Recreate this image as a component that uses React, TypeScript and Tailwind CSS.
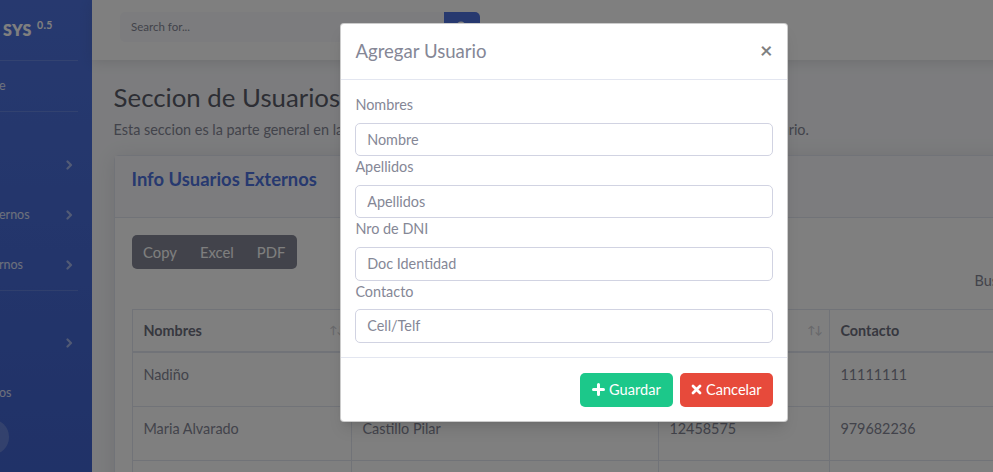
import React from 'react';

const font = { fontFamily: 'Lato, "Noto Sans", sans-serif' };

const Chevron = () => (
  <svg width="7" height="10" viewBox="0 0 7 10" className="text-white/50">
    <path d="M1.5 1.5 L5 5 L1.5 8.5" fill="none" stroke="currentColor" strokeWidth="2.2" strokeLinecap="round" strokeLinejoin="round" />
  </svg>
);

const SideItem = ({ label, arrow }: { label?: string; arrow?: boolean }) => (
  <div className="h-[50px] flex items-center justify-between pr-[19px] text-[12.5px] text-white/80">
    <span className="-ml-[1px]">{label}</span>
    {arrow && <Chevron />}
  </div>
);

const Divider = () => <div className="h-px w-[78px] bg-white/15" />;

const Sidebar = () => (
  <aside className="w-[92px] shrink-0 bg-gradient-to-b from-[#4e73df] to-[#4164d0] overflow-hidden">
    <div className="h-[60px] flex items-center pl-[3px] text-white font-extrabold text-[16px] tracking-wide">
      SYS <sup className="ml-[5px] text-[10.5px] font-bold">0.5</sup>
    </div>
    <Divider />
    <SideItem label="e" />
    <Divider />
    <div className="h-[28px]" />
    <SideItem arrow />
    <SideItem label="ernos" arrow />
    <SideItem label="rnos" arrow />
    <Divider />
    <div className="h-[27px]" />
    <SideItem arrow />
    <SideItem label="os" />
    <div className="-ml-[27px] mt-[1px] w-[36px] h-[36px] rounded-full bg-white/20" />
  </aside>
);

const rows = [
  ['Nadiño', 'Perez Lopez', '11111111', '11111111'],
  ['Maria Alvarado', 'Castillo Pilar', '12458575', '979682236'],
  ['', '', '', ''],
];

const Sort = () => <span className="text-[11px] text-[#858796]/40 tracking-[-1px]">↑↓</span>;

const Page = () => (
  <div className="w-[1180px] shrink-0">
    <div className="h-[60px] bg-white shadow-[0_2px_12px_rgba(58,59,69,0.15)] pl-[28px] pt-[12px] flex">
      <div className="w-[324px] h-[30px] bg-[#f8f9fc] rounded-l-[5px] pl-[11px] flex items-center text-[11.5px] text-[#858796]">
        Search for...
      </div>
      <div className="w-[36px] h-[30px] bg-[#4e73df] rounded-r-[5px] flex items-center justify-center">
        <svg width="12" height="12" viewBox="0 0 12 12">
          <circle cx="5" cy="5" r="3.6" fill="none" stroke="#fff" strokeWidth="1.8" />
          <path d="M7.6 7.6 L10.8 10.8" stroke="#fff" strokeWidth="2" strokeLinecap="round" />
        </svg>
      </div>
    </div>
    <div className="px-[21.6px] pt-[21.6px]">
      <h1 className="text-[25.8px] leading-[30px] text-[#5a5c69] mb-[7.2px]">Seccion de Usuarios</h1>
      <p className="text-[14.4px] leading-[21.6px] text-[#858796] mb-[14.4px]">
        Esta seccion es la parte general en la que se registra, se lista, se modifica y se elimina los datos de cada usuario.
      </p>
      <div className="w-[1130px] bg-white border border-[#e3e6f0] rounded-[5px] shadow-[0_2px_20px_rgba(58,59,69,0.12)]">
        <div className="h-[62px] bg-[#f8f9fc] border-b border-[#e3e6f0] px-[17px] pt-[12px]">
          <h6 className="text-[18.4px] leading-[22px] font-bold text-[#4e73df]">Info Usuarios Externos</h6>
        </div>
        <div className="p-[17px]">
          <div className="inline-flex h-[34px] rounded-[5px] bg-[#858796] text-white text-[14.8px] overflow-hidden">
            <span className="px-[11.5px] flex items-center">Copy</span>
            <span className="px-[11.5px] flex items-center">Excel</span>
            <span className="px-[11.5px] flex items-center">PDF</span>
          </div>
          <div className="h-[24px] flex items-center pl-[843px] text-[14.4px] text-[#858796]">Buscar:</div>
          <table className="mt-[16px] w-[1090px] border-collapse text-[14.4px] text-[#858796]">
            <thead>
              <tr className="h-[43px] border-b-2 border-[#e3e6f0]">
                {[
                  ['Nombres', 'w-[219px]'],
                  ['Apellidos', 'w-[307px]'],
                  ['Nro de DNI', 'w-[171px]'],
                  ['Contacto', ''],
                ].map(([h, w]) => (
                  <th key={h} className={`${w} border border-[#e3e6f0] pl-[10.8px] pr-[7px] text-left font-bold text-[#6e707e]`}>
                    <div className="flex items-center justify-between">
                      <span>{h}</span>
                      <Sort />
                    </div>
                  </th>
                ))}
              </tr>
            </thead>
            <tbody>
              {rows.map((r, ri) => (
                <tr key={ri} className="h-[54px]">
                  {r.map((c, i) => (
                    <td key={i} className="border border-[#e3e6f0] px-[10.8px] pt-[10.8px] align-top leading-[21.6px]">
                      {c}
                    </td>
                  ))}
                </tr>
              ))}
            </tbody>
          </table>
        </div>
      </div>
    </div>
  </div>
);

const Field = ({ label, ph }: { label: string; ph: string }) => (
  <div>
    <label className="block text-[14.4px] leading-[21.6px] mb-[7px] text-[#858796]">{label}</label>
    <input
      className="block w-full h-[33.6px] border border-[#d1d3e2] rounded-[5px] px-[10.8px] text-[14.4px] text-[#6e707e] placeholder:text-[#858796] outline-none"
      placeholder={ph}
    />
  </div>
);

const Modal = () => (
  <div className="absolute left-[340px] top-[23px] w-[448px] bg-white border border-black/20 rounded-[4px] shadow-lg">
    <div className="h-[56px] px-[14.4px] flex items-center justify-between border-b border-[#e3e6f0]">
      <h5 className="text-[18.6px] leading-[27px] text-[#858796]">Agregar Usuario</h5>
      <button className="text-[21.6px] font-bold leading-none text-black/50 -mt-[2px]">×</button>
    </div>
    <div className="p-[14.4px] pt-[14px]">
      <Field label="Nombres" ph="Nombre" />
      <Field label="Apellidos" ph="Apellidos" />
      <Field label="Nro de DNI" ph="Doc Identidad" />
      <Field label="Contacto" ph="Cell/Telf" />
    </div>
    <div className="border-t border-[#e3e6f0] p-[14.4px] flex justify-end gap-[7.2px]">
      <button className="h-[34px] px-[12px] rounded-[5px] bg-[#1cc88a] text-white text-[14.6px] flex items-center gap-[4px]">
        <svg width="13" height="13" viewBox="0 0 13 13">
          <path d="M6.5 1.5 V11.5 M1.5 6.5 H11.5" stroke="#fff" strokeWidth="3" strokeLinecap="round" />
        </svg>
        Guardar
      </button>
      <button className="h-[34px] px-[11px] rounded-[5px] bg-[#e74a3b] text-white text-[14.6px] flex items-center gap-[4px]">
        <svg width="11" height="11" viewBox="0 0 11 11">
          <path d="M2 2 L9 9 M9 2 L2 9" stroke="#fff" strokeWidth="2.8" strokeLinecap="round" />
        </svg>
        Cancelar
      </button>
    </div>
  </div>
);

export default function App() {
  return (
    <div className="relative w-[993px] h-[472px] overflow-hidden flex bg-[#f8f9fc]" style={font}>
      <Sidebar />
      <Page />
      <div className="absolute inset-0 bg-black/50" />
      <Modal />
    </div>
  );
}
